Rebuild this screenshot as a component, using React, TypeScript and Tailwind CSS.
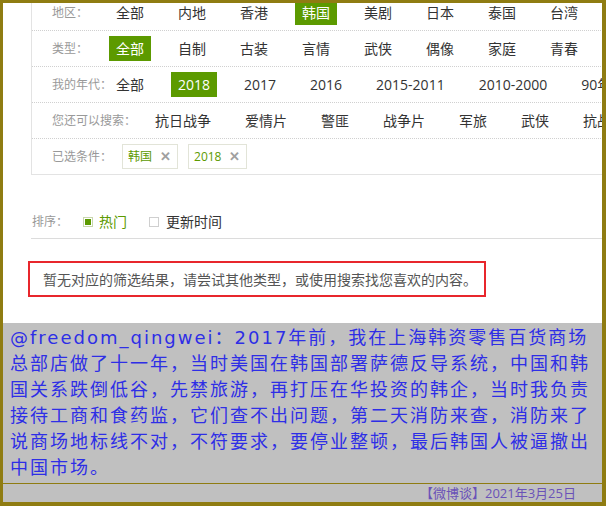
import React from 'react';

const GREEN = '#5c9a00';

type Item = { text: string; active?: boolean };

const ROWS: { label: string; labelW: string; items: Item[] }[] = [
  {
    label: '地区：',
    labelW: 'w-[57px]',
    items: [
      { text: '全部' }, { text: '内地' }, { text: '香港' }, { text: '韩国', active: true },
      { text: '美剧' }, { text: '日本' }, { text: '泰国' }, { text: '台湾' },
    ],
  },
  {
    label: '类型：',
    labelW: 'w-[57px]',
    items: [
      { text: '全部', active: true }, { text: '自制' }, { text: '古装' }, { text: '言情' },
      { text: '武侠' }, { text: '偶像' }, { text: '家庭' }, { text: '青春' },
    ],
  },
  {
    label: '我的年代：',
    labelW: 'w-[57px]',
    items: [
      { text: '全部' }, { text: '2018', active: true }, { text: '2017' }, { text: '2016' },
      { text: '2015-2011' }, { text: '2010-2000' }, { text: '90年代' },
    ],
  },
  {
    label: '您还可以搜索：',
    labelW: 'w-[96px]',
    items: [
      { text: '抗日战争' }, { text: '爱情片' }, { text: '警匪' }, { text: '战争片' },
      { text: '军旅' }, { text: '武侠' }, { text: '抗战' },
    ],
  },
];

const LINES = [
  '@freedom_qingwei：2017年前，我在上海韩资零售百货商场',
  '总部店做了十一年，当时美国在韩国部署萨德反导系统，中国和韩',
  '国关系跌倒低谷，先禁旅游，再打压在华投资的韩企，当时我负责',
  '接待工商和食药监，它们查不出问题，第二天消防来查，消防来了',
  '说商场地标线不对，不符要求，要停业整顿，最后韩国人被逼撤出',
  '中国市场。',
];

function Tag({ text }: { text: string }) {
  return (
    <div className="flex items-center h-[25px] border border-[#e2e4d8] pl-[5px] pr-[6px] mr-[10px] bg-white">
      <span className="text-[12px] text-[#5c9a00]">{text}</span>
      <span className="ml-[8px] text-[13px] font-bold text-[#a0a0a0] leading-none">✕</span>
    </div>
  );
}

export default function App() {
  return (
    <div
      className="w-[606px] h-[506px] flex flex-col border-l-[3px] border-t-[3px] border-r-4 border-b-4 border-[#8f7c12] overflow-hidden"
      style={{ fontFamily: '"Open Sans", "Noto Sans CJK SC", sans-serif' }}
    >
      {/* screenshot part */}
      <div className="h-[320px] bg-white overflow-hidden shrink-0">
        <div className="ml-[28px] mt-[-8px] w-[640px] border-l border-b border-[#e3e3e3]">
          {ROWS.map((row) => (
            <div key={row.label} className="h-[36px] flex items-center pl-[20px] border-b border-dotted border-[#d0d0d0]">
              <span className={`${row.labelW} shrink-0 whitespace-nowrap text-[12px] text-[#999]`}>{row.label}</span>
              {row.items.map((it, i) => (
                <span
                  key={i}
                  className={`shrink-0 whitespace-nowrap px-[7px] mr-[20px] h-[25px] leading-[25px] text-[14px] ${
                    it.active ? 'bg-[#5c9a00] text-white' : 'text-[#333]'
                  }`}
                >
                  {it.text}
                </span>
              ))}
            </div>
          ))}
          <div className="h-[35px] flex items-center pl-[20px]">
            <span className="w-[70px] shrink-0 text-[12px] text-[#999]">已选条件：</span>
            <Tag text="韩国" />
            <Tag text="2018" />
          </div>
        </div>

        <div className="ml-[28px] mt-[30px] h-[34px] flex items-center pl-[1px] border-b border-[#dcdcdc]">
          <span className="text-[12px] text-[#999] w-[51px]">排序：</span>
          <span className="w-[10px] h-[10px] border border-[#c8d6ad] p-[1px] flex">
            <span className="flex-1 bg-[#5c9a00]" />
          </span>
          <span className="ml-[6px] text-[14px]" style={{ color: GREEN }}>热门</span>
          <span className="ml-[22px] w-[10px] h-[10px] border border-[#cfcfcf] bg-white" />
          <span className="ml-[7px] text-[14px] text-[#333]">更新时间</span>
        </div>

        <div className="ml-[25px] mt-[22px] w-[458px] h-[36px] border-2 border-[#e8262c] flex items-center pl-[13px]">
          <span className="text-[14px] text-[#555] whitespace-nowrap">
            暂无对应的筛选结果，请尝试其他类型，或使用搜索找您喜欢的内容。
          </span>
        </div>
      </div>

      {/* comment part */}
      <div className="flex-1 flex flex-col bg-[#c0c0c0]">
        <div
          className="h-[160px] pt-[2px] pl-[7px] text-[18px] leading-[26px] tracking-[2px] text-[#2e2ee6]"
          style={{ fontFamily: '"DejaVu Sans", "Noto Sans CJK SC", sans-serif' }}
        >
          {LINES.map((l) => (
            <div key={l} className="whitespace-nowrap">{l}</div>
          ))}
        </div>
        <div className="h-px bg-[#8f7c12]" />
        <div className="flex-1 flex items-center justify-end pr-[26px] text-[13px] text-[#6a52b8]">
          【微博谈】2021年3月25日
        </div>
      </div>
    </div>
  );
}
